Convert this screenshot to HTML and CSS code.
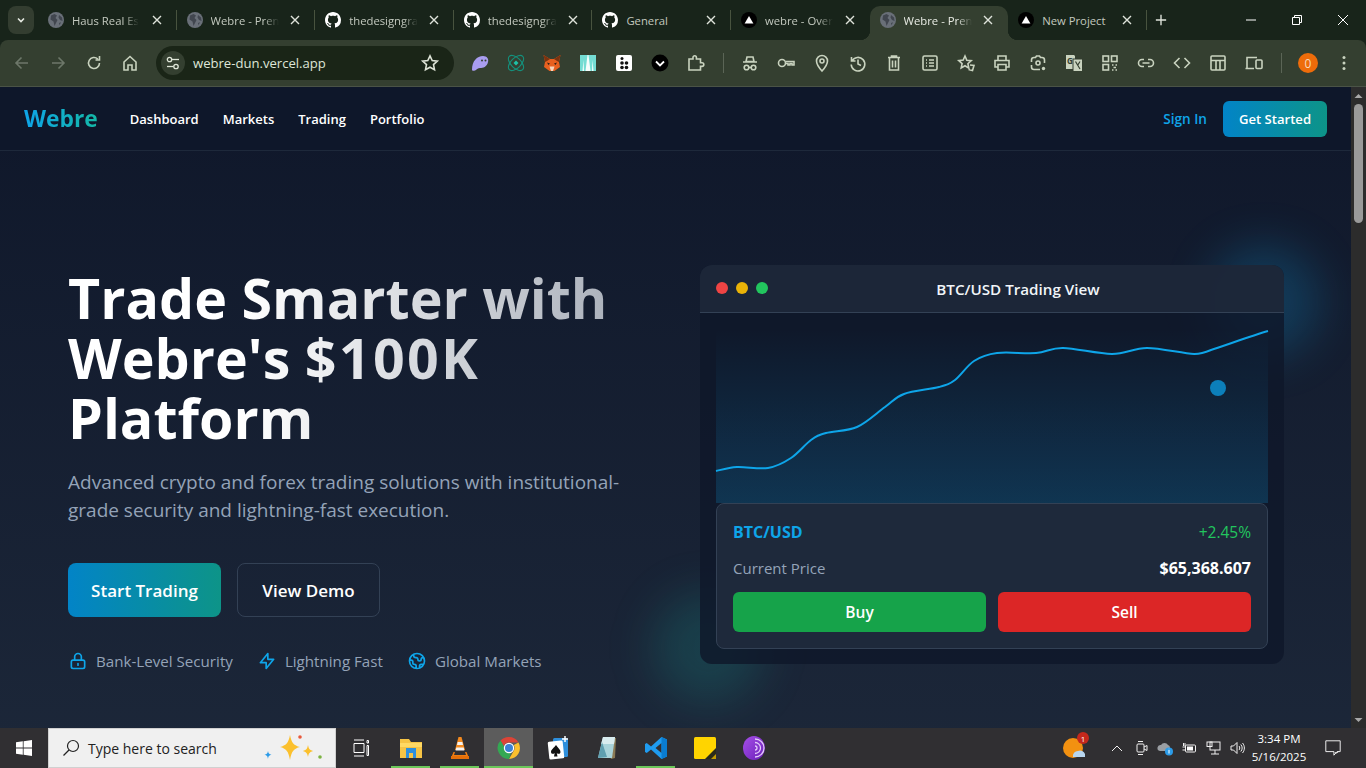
FILE: index.html
```html
<!DOCTYPE html>
<html lang="en">
<head>
<meta charset="utf-8">
<title>Webre - Premium Trading</title>
<link rel="stylesheet" href="styles.css">
</head>
<body>
<svg class="defs" aria-hidden="true">
  <defs>
    <symbol id="globe" viewBox="0 0 16 16"><circle cx="8" cy="8" r="8" fill="#696f78"/><path d="M3 3.500 6.500 2 9 3.500 7.500 6 9.500 8 8 11 6.500 14 5.500 9.500 2.500 7.500ZM11 3l3 2.500.6 3.500-2.600-1-1.500-2.500ZM11 11l2-.8-1.500 3Z" fill="#41464f"/></symbol>
    <symbol id="gh" viewBox="0 0 16 16"><path fill="#fff" d="M8 0C3.58 0 0 3.58 0 8c0 3.54 2.29 6.53 5.47 7.59.4.07.55-.17.55-.38 0-.19-.01-.82-.01-1.49-2.01.37-2.53-.49-2.69-.94-.09-.23-.48-.94-.82-1.13-.28-.15-.68-.52-.01-.53.63-.01 1.08.58 1.23.82.72 1.21 1.87.87 2.33.66.07-.52.28-.87.51-1.07-1.78-.2-3.64-.89-3.64-3.95 0-.87.31-1.59.82-2.15-.08-.2-.36-1.02.08-2.12 0 0 .67-.21 2.2.82.64-.18 1.32-.27 2-.27.68 0 1.36.09 2 .27 1.53-1.04 2.2-.82 2.2-.82.44 1.1.16 1.92.08 2.12.51.56.82 1.27.82 2.15 0 3.07-1.87 3.75-3.65 3.95.29.25.54.73.54 1.48 0 1.07-.01 1.93-.01 2.2 0 .21.15.46.55.38A8.013 8.013 0 0016 8c0-4.42-3.58-8-8-8z"/></symbol>
    <symbol id="vercel" viewBox="0 0 16 16"><circle cx="8" cy="8" r="8" fill="#000"/><path d="M8 4l4.400 7.600H3.600z" fill="#fff"/></symbol>
    <symbol id="x" viewBox="0 0 16 16"><path d="M4 4l8 8M12 4l-8 8" fill="none" stroke="currentColor" stroke-width="1.400"/></symbol>
    <symbol id="back" viewBox="0 0 20 20"><path d="M16 10H4.500M9.500 4.500 4 10l5.500 5.500" /></symbol>
    <symbol id="fwd" viewBox="0 0 20 20"><path d="M4 10h11.500M10.500 4.500 16 10l-5.500 5.500" /></symbol>
    <symbol id="reload" viewBox="0 0 20 20"><path d="M15.500 10a5.500 5.500 0 1 1-1.700-4M15.500 3v4h-4" /></symbol>
    <symbol id="home" viewBox="0 0 20 20"><path d="M4 9 10 3.500 16 9v8h-4v-5H8v5H4z" /></symbol>
    <symbol id="tune" viewBox="0 0 16 16"><path d="M7 4.500h7"/><circle cx="4.500" cy="4.500" r="2.200"/><path d="M2 11.500h6.500"/><circle cx="11" cy="11.500" r="2.200"/></symbol>
    <symbol id="star" viewBox="0 0 20 20"><path d="M10 2.800l2.200 4.700 5.100.6-3.800 3.500 1 5.100L10 14.200l-4.500 2.500 1-5.100-3.800-3.500 5.100-.6z" /></symbol>
    <symbol id="puzzle" viewBox="0 0 20 20"><path d="M3 6h4V4.500a1.700 1.700 0 0 1 3.400 0V6h4.100v3.800H16a1.800 1.800 0 0 1 0 3.600h-1.500V17H3z" /></symbol>
    <symbol id="spy" viewBox="0 0 20 20"><path d="M7 4h6l1 4.500H6zM3 9h14" /><circle cx="6.500" cy="14.500" r="2.300"/><circle cx="13.500" cy="14.500" r="2.300"/><path d="M8.800 14.500h2.400"/></symbol>
    <symbol id="key" viewBox="0 0 20 20"><circle cx="6" cy="10" r="3.500"/><path d="M9.500 8.500H18v3.500h-2v-1.500h-2V12h-2v-1.500H9.500"/></symbol>
    <symbol id="pin" viewBox="0 0 20 20"><path d="M10 18s-5.500-6-5.500-10a5.500 5.500 0 0 1 11 0c0 4-5.500 10-5.500 10z"/><circle cx="10" cy="8" r="2"/></symbol>
    <symbol id="history" viewBox="0 0 20 20"><path d="M3.500 4v4h4M4 8a6.800 6.800 0 1 1-.8 3.500M10 6.500V11l3 1.500"/></symbol>
    <symbol id="trash" viewBox="0 0 20 20"><path d="M4 4.500h12M7.500 4.500V3h5v1.500M5.500 4.500V17h9V4.500M8.500 7.500v7M11.500 7.500v7"/></symbol>
    <symbol id="list" viewBox="0 0 20 20"><rect x="3" y="3" width="14" height="14" rx="1.500"/><path d="M6 7h1M9 7h5M6 10h1M9 10h5M6 13h1M9 13h5"/></symbol>
    <symbol id="stars" viewBox="0 0 20 20"><path d="M9 3l1.800 4.200 4.400.5-3.300 3 .9 4.400L9 12.800 5.200 15l.9-4.400-3.300-3 4.400-.5zM14 12l4 .5-1.500 5-4-1"/></symbol>
    <symbol id="print" viewBox="0 0 20 20"><path d="M6 7V3h8v4M6 14H3V7.500h14V14h-3M6 11.500h8V17H6z"/></symbol>
    <symbol id="lens" viewBox="0 0 20 20"><path d="M3.500 9V7a2.500 2.500 0 0 1 2.500-2.500h1.500l1-1.500h3l1 1.500H14a2.500 2.500 0 0 1 2.500 2.500v3M3.500 12v2A2.500 2.500 0 0 0 6 16.500h6"/><circle cx="10" cy="10" r="2"/><circle cx="15.500" cy="15.500" r="1.700" fill="currentColor" stroke="none"/></symbol>
    <symbol id="translate" viewBox="0 0 20 20"><path d="M2 2h8l1 1v13H2z" fill="currentColor" stroke="none"/><text x="3" y="11" class="gtext">G</text><rect x="9" y="6" width="9.500" height="12.500" fill="currentColor" stroke="#343f30" stroke-width="1"/><path d="M11.500 8.500l4.500 7.500M16 8.500l-2.500 4" stroke="#343f30" stroke-width="1.200"/></symbol>
    <symbol id="qr" viewBox="0 0 20 20"><rect x="3" y="3" width="5.500" height="5.500"/><rect x="11.500" y="3" width="5.500" height="5.500"/><rect x="3" y="11.500" width="5.500" height="5.500"/><path d="M12 12h1.500M15.500 12H17M13.500 14.500H16M12 17h1.500M15.500 17H17" /></symbol>
    <symbol id="link" viewBox="0 0 20 20"><path d="M8 6.500H6a3.500 3.500 0 0 0 0 7h2M12 6.500h2a3.500 3.500 0 0 1 0 7h-2M6.500 10h7"/></symbol>
    <symbol id="code" viewBox="0 0 20 20"><path d="M7.500 5 2.500 10l5 5M12.500 5l5 5-5 5"/></symbol>
    <symbol id="layout" viewBox="0 0 20 20"><rect x="3" y="3" width="14" height="14" rx="1"/><path d="M3 7.500h14M8 7.500V17M12 7.500V17"/></symbol>
    <symbol id="devices" viewBox="0 0 20 20"><path d="M3 15V4.500h10M1.500 15.500H10"/><rect x="12" y="7" width="6" height="8.500" rx="1"/></symbol>
    <linearGradient id="torgrad" x1="0" y1="0" x2="1" y2="1"><stop offset="0" stop-color="#a64fe8"/><stop offset="1" stop-color="#6a1fb8"/></linearGradient>
  </defs>
</svg>

<header class="chrome">
  <div class="tabstrip">
    <div class="tabsearch"><svg class="mini" viewBox="0 0 12 12"><path d="M3 4.500 6 7.500 9 4.500"/></svg></div>
    <div class="tab sep"><svg class="fav"><use href="#globe"/></svg><span class="title fade">Haus Real Es</span><svg class="close"><use href="#x"/></svg></div>
    <div class="tab sep"><svg class="fav"><use href="#globe"/></svg><span class="title fade">Webre - Pren</span><svg class="close"><use href="#x"/></svg></div>
    <div class="tab sep"><svg class="fav"><use href="#gh"/></svg><span class="title fade">thedesigngra</span><svg class="close"><use href="#x"/></svg></div>
    <div class="tab sep"><svg class="fav"><use href="#gh"/></svg><span class="title fade">thedesigngra</span><svg class="close"><use href="#x"/></svg></div>
    <div class="tab sep"><svg class="fav"><use href="#gh"/></svg><span class="title">General</span><svg class="close"><use href="#x"/></svg></div>
    <div class="tab"><svg class="fav"><use href="#vercel"/></svg><span class="title fade">webre - Over</span><svg class="close"><use href="#x"/></svg></div>
    <div class="tab active"><svg class="fav"><use href="#globe"/></svg><span class="title fade">Webre - Pren</span><svg class="close"><use href="#x"/></svg></div>
    <div class="tab sep"><svg class="fav"><use href="#vercel"/></svg><span class="title">New Project</span><svg class="close"><use href="#x"/></svg></div>
    <div class="newtab"><svg class="plus" viewBox="0 0 14 14"><path d="M7 1v12M1 7h12"/></svg></div>
    <div class="winctl">
      <div class="wbtn"><svg viewBox="0 0 12 12"><path d="M1 6h10"/></svg></div>
      <div class="wbtn"><svg viewBox="0 0 12 12"><path d="M1.500 3.500h7v7h-7zM3.500 3.500v-2h7v7h-2"/></svg></div>
      <div class="wbtn"><svg viewBox="0 0 12 12"><path d="M1 1l10 10M11 1 1 11"/></svg></div>
    </div>
  </div>
  <div class="toolbar">
    <div class="tb dim"><svg class="ic"><use href="#back"/></svg></div>
    <div class="tb dim"><svg class="ic"><use href="#fwd"/></svg></div>
    <div class="tb"><svg class="ic"><use href="#reload"/></svg></div>
    <div class="tb"><svg class="ic"><use href="#home"/></svg></div>
    <div class="omnibox">
      <span class="siteinfo"><svg class="tune"><use href="#tune"/></svg></span>
      <span class="url">webre-dun.vercel.app</span>
      <svg class="ic"><use href="#star"/></svg>
    </div>
    <div class="tb"><svg class="ext" viewBox="0 0 20 20"><path d="M2 17C2 8 7 3 13 3c4 0 6 3 5 6-1 5-5 6-8 6-2 0-3 1-4 2-1 .8-4 1-4 0z" fill="#a99df0"/><circle cx="12" cy="7.500" r="1" fill="#343f30"/><circle cx="15.500" cy="7.500" r="1" fill="#343f30"/></svg></div>
    <div class="tb"><svg class="ext" viewBox="0 0 20 20" fill="none" stroke="#14907c" stroke-width="1.100"><ellipse cx="10" cy="10" rx="9.500" ry="5" transform="rotate(45 10 10)"/><ellipse cx="10" cy="10" rx="9.500" ry="5" transform="rotate(-45 10 10)"/><path d="M10 7.500 12.500 10 10 12.500 7.500 10z" fill="#1fc0a5" stroke="none"/></svg></div>
    <div class="tb"><svg class="ext" viewBox="0 0 20 20"><path d="M1.500 2 8 6h4l6.500-4L17 9l1 5-3.500 2.500-2 1.500h-5l-2-1.500L2 14l1-5z" fill="#e8601f"/><path d="M1.500 2 8 6 5 8 3 9zM18.500 2 12 6l3 2 2 1z" fill="#7a3310"/><path d="M5 9.500l3 1-1.500 1.500zM15 9.500l-3 1 1.500 1.500z" fill="#2d2018"/><path d="M7.500 13.500h5L11 18H9z" fill="#f5d6bd"/></svg></div>
    <div class="tb"><svg class="ext" viewBox="0 0 20 20"><rect x="2" y="2" width="16" height="16" fill="#f4fdfc"/><path d="M2 2h7.500L7.500 18H6L5.500 7 4.500 18H2zM18 2h-7.500l2 16H14l.5-11 1 11H18z" fill="#74dcd3"/></svg></div>
    <div class="tb"><svg class="ext" viewBox="0 0 20 20"><rect x="2" y="2" width="16" height="16" rx="2" fill="#fff"/><g fill="#111"><circle cx="8" cy="5.500" r="1.500"/><circle cx="8" cy="10" r="1.800"/><circle cx="12.500" cy="10" r="1.800"/><circle cx="8" cy="14.500" r="1.800"/><circle cx="12.500" cy="14.500" r="1.800"/></g></svg></div>
    <div class="tb"><svg class="ext" viewBox="0 0 20 20"><circle cx="10" cy="10" r="8.500" fill="#000"/><path d="M6 8.500l4 4 4-4" fill="none" stroke="#fff" stroke-width="1.800"/></svg></div>
    <div class="tb"><svg class="ic"><use href="#puzzle"/></svg></div>
    <div class="tbsep"></div>
    <div class="tb"><svg class="ic"><use href="#spy"/></svg></div>
    <div class="tb"><svg class="ic"><use href="#key"/></svg></div>
    <div class="tb"><svg class="ic"><use href="#pin"/></svg></div>
    <div class="tb"><svg class="ic"><use href="#history"/></svg></div>
    <div class="tb"><svg class="ic"><use href="#trash"/></svg></div>
    <div class="tb"><svg class="ic"><use href="#list"/></svg></div>
    <div class="tb"><svg class="ic"><use href="#stars"/></svg></div>
    <div class="tb"><svg class="ic"><use href="#print"/></svg></div>
    <div class="tb"><svg class="ic"><use href="#lens"/></svg></div>
    <div class="tb"><svg class="ic"><use href="#translate"/></svg></div>
    <div class="tb"><svg class="ic"><use href="#qr"/></svg></div>
    <div class="tb"><svg class="ic"><use href="#link"/></svg></div>
    <div class="tb"><svg class="ic"><use href="#code"/></svg></div>
    <div class="tb"><svg class="ic"><use href="#layout"/></svg></div>
    <div class="tb"><svg class="ic"><use href="#devices"/></svg></div>
    <div class="tbsep"></div>
    <div class="tb"><span class="avatar">0</span></div>
    <div class="tb"><svg class="ic dots" viewBox="0 0 20 20"><circle cx="10" cy="4.500" r="1.500"/><circle cx="10" cy="10" r="1.500"/><circle cx="10" cy="15.500" r="1.500"/></svg></div>
  </div>
</header>

<div class="viewport">
  <main class="page">
    <nav class="nav">
      <div class="nav-left">
        <span class="logo">Webre</span>
        <a class="navlink">Dashboard</a>
        <a class="navlink">Markets</a>
        <a class="navlink">Trading</a>
        <a class="navlink">Portfolio</a>
      </div>
      <div class="nav-right">
        <a class="signin">Sign In</a>
        <a class="getstarted">Get Started</a>
      </div>
    </nav>
    <section class="hero">
      <div class="copy">
        <h1 class="headline">Trade Smarter with Webre's <span class="amount">$100K</span> Platform</h1>
        <p class="lead">Advanced crypto and forex trading solutions with institutional-grade security and lightning-fast execution.</p>
        <div class="cta">
          <a class="btn primary">Start Trading</a>
          <a class="btn ghost">View Demo</a>
        </div>
        <div class="features">
          <div class="feature"><svg class="ficon" viewBox="0 0 24 24"><path d="M12 15v2m-6 4h12a2 2 0 002-2v-6a2 2 0 00-2-2H6a2 2 0 00-2 2v6a2 2 0 002 2zm10-10V7a4 4 0 00-8 0v4h8z"/></svg><span>Bank-Level Security</span></div>
          <div class="feature"><svg class="ficon" viewBox="0 0 24 24"><path d="M13 10V3L4 14h7v7l9-11h-7z"/></svg><span>Lightning Fast</span></div>
          <div class="feature"><svg class="ficon" viewBox="0 0 24 24"><path d="M3.055 11H5a2 2 0 012 2v1a2 2 0 002 2 2 2 0 012 2v2.945M8 3.935V5.500A2.500 2.500 0 0010.500 8h.5a2 2 0 012 2 2 2 0 104 0 2 2 0 012-2h1.064M15 20.488V18a2 2 0 012-2h3.064M21 12a9 9 0 11-18 0 9 9 0 0118 0z"/></svg><span>Global Markets</span></div>
        </div>
      </div>
      <div class="cardwrap">
        <div class="glow glow-sky"></div>
        <div class="glow glow-teal"></div>
        <div class="card">
          <div class="card-head">
            <div class="lights"><i class="l red"></i><i class="l amber"></i><i class="l green"></i></div>
            <div class="card-title">BTC/USD Trading View</div>
          </div>
          <div class="card-body">
            <div class="chart">
              <svg class="chart-svg" viewBox="0 0 552 174" preserveAspectRatio="none">
                <path class="chart-line" d="M0 142C3.500 141.300 12.300 138.500 21 138C29.700 137.500 43 140.500 52 139C61 137.500 67.800 133.700 75 129C82.200 124.300 89.200 115.200 95 111C100.800 106.800 102.300 106.200 110 104C117.700 101.800 131.200 102.300 141 98C150.800 93.700 161.200 83.500 169 78C176.800 72.500 179 68.300 188 65C197 61.700 214.500 60.300 223 58C231.500 55.700 233.200 55.300 239 51C244.800 46.700 251 36.500 258 32C265 27.500 270.700 25.300 281 24C291.300 22.700 309 24.800 320 24C331 23.200 334.300 18.800 347 19C359.700 19.200 382 25 396 25C410 25 417.300 19 431 19C444.700 19 467.300 24.700 478 25C484 25.200 489 23.500 495 21C505 18 535 7 552 2"/>
              </svg>
              <i class="dot"></i>
            </div>
            <div class="ticket">
              <div class="row r1"><span class="pair">BTC/USD</span><span class="chg">+2.45%</span></div>
              <div class="row r2"><span class="cur">Current Price</span><span class="price">$65,368.607</span></div>
              <div class="trade"><a class="tbtn buy">Buy</a><a class="tbtn sell">Sell</a></div>
            </div>
          </div>
        </div>
      </div>
    </section>
  </main>
  <aside class="scrollbar">
    <svg class="sarrow" viewBox="0 0 15 17"><path d="M3.500 11l4-4 4 4z"/></svg>
    <div class="thumb"></div>
    <div class="strack"></div>
    <svg class="sarrow" viewBox="0 0 15 17"><path d="M3.500 7l4 4 4-4z"/></svg>
  </aside>
</div>

<footer class="taskbar">
  <div class="start"><svg viewBox="0 0 16 16" class="winlogo"><path d="M0 2.300 6.800 1.300v6.300H0zM7.600 1.200 16 0v7.600H7.600zM0 8.400h6.800v6.300L0 13.700zM7.600 8.400H16V16l-8.400-1.200z"/></svg></div>
  <div class="search">
    <svg class="lens-s" viewBox="0 0 18 18"><circle cx="11" cy="7" r="5.500"/><path d="M7 11l-5.500 5.500"/></svg>
    <span class="stext">Type here to search</span>
    <svg class="spark" viewBox="0 0 64 30"><path d="M28 2c1.500 8 4 10.500 10 12-6 1.500-8.500 4-10 13-1.500-9-4-11.500-10-13 6-1.500 8.500-4 10-12z" fill="#fbc02d"/><path d="M46 12c.7 4 2 5 5 6-3 1-4.300 2-5 6-.7-4-2-5-5-6 3-1 4.300-2 5-6z" fill="#fbc02d"/><path d="M6 18c.4 2.500 1 3 3.500 3.700C7 22.500 6.400 23 6 26c-.4-3-1-3.500-3.500-4.300C5 21 5.600 20.500 6 18z" fill="#2b9be8"/><circle cx="38" cy="4" r="1.800" fill="#e8593b"/><circle cx="58" cy="24" r="1.800" fill="#7cb342"/></svg>
  </div>
  <div class="taskview"><svg viewBox="0 0 18 18" class="tvicon"><path d="M2 1h10M2 17h10M2 4.500h10v9H2zM15 1.500h1.500V4H15zM15 6.500h1.500v10H15z"/></svg></div>
  <div class="apps">
    <div class="app open"><svg viewBox="0 0 24 24"><path d="M1 3h9l2 3h11v16H1z" fill="#f6c445"/><path d="M1 7h22v4H1z" fill="#ffd964"/><path d="M7 12h10v10h-3v-5h-4v5H7z" fill="#2e8fdc"/></svg></div>
    <div class="app open"><svg viewBox="0 0 24 24"><path d="M10.500 1h3L17 14H7z" fill="#f48a1f"/><path d="M9.700 6h4.600l.7 3H9z" fill="#f2f2f2"/><path d="M8.300 11.500h7.400l.7 3H7.600z" fill="#f2f2f2"/><path d="M5.500 16 3 22h18l-2.500-6H17l1 3H6l1-3z" fill="#ef7d11"/><path d="M3 20h18v3H3z" fill="#e56f09"/></svg></div>
    <div class="app open current"><svg viewBox="0 0 24 24"><path d="M12 1a11 11 0 0 1 9.500 5.500H12a5.500 5.500 0 0 0-5.200 3.700L3.500 4.600A11 11 0 0 1 12 1z" fill="#db4437"/><path d="M21.500 6.500A11 11 0 0 1 12 23l4.800-8.300A5.500 5.500 0 0 0 16.800 9z" fill="#fbc02d"/><path d="M12 23A11 11 0 0 1 3.500 4.600l4.800 8.200a5.500 5.500 0 0 0 5.700 4z" fill="#34a853"/><circle cx="12" cy="12" r="5.200" fill="#fff"/><circle cx="12" cy="12" r="4" fill="#3b82d6"/></svg></div>
    <div class="app"><svg viewBox="0 0 24 24"><rect x="7" y="2" width="15" height="19" rx="1.500" fill="#2e8fdc"/><path d="M19 0v6M16 3h6" stroke="#fff" stroke-width="1.500"/><rect x="2.500" y="5" width="15" height="18" rx="1.500" fill="#fff" transform="rotate(-6 10 14)"/><path d="M10 9c2 3 4.500 4.500 4.500 7 0 2-2.500 2.500-3.700 1l.7 3.500H8l.7-3.500C7.500 18.500 5 18 5 16c0-2.500 3-4 5-7z" fill="#111"/></svg></div>
    <div class="app"><svg viewBox="0 0 24 24"><path d="M8 2h13l-1 20-4 1z" fill="#8a7a55"/><path d="M8 1h12l-3 21H3z" fill="#a9d3da"/><path d="M8 1h12l-1 7H6z" fill="#d9ecef"/><path d="M3 22 7 6l5 15z" fill="#5f9fb0"/></svg></div>
    <div class="app open"><svg viewBox="0 0 24 24"><path d="M17.500 1 23 3.500v17L17.500 23 7 13.500 2.800 17 1 16V8l1.800-1L7 10.500zM17.500 7l-6 5 6 5z" fill="#1f9cf0"/><path d="M17.500 1 23 3.500v17L17.500 23z" fill="#0a7cd0"/></svg></div>
    <div class="app"><svg viewBox="0 0 24 24"><rect x="1" y="1" width="22" height="22" rx="1.500" fill="#ffd400"/><path d="M23 12 12 23h11z" fill="#2a2a1a"/><path d="M23 18l-5 5h5z" fill="#c29a00"/></svg></div>
    <div class="app"><svg viewBox="0 0 24 24"><ellipse cx="12" cy="12" rx="11" ry="12" fill="url(#torgrad)"/><g fill="none" stroke="#e3c9fa" stroke-width="1.300"><path d="M13 3a9 9 0 0 1 0 18"/><path d="M13 6.500a5.500 5.500 0 0 1 0 11"/><path d="M13 10a2 2 0 0 1 0 4"/></g></svg></div>
  </div>
  <div class="tray">
    <div class="weather"><svg viewBox="0 0 24 24"><circle cx="11" cy="12" r="10" fill="#f29111"/><path d="M11 21a5 5 0 0 1 5-6 5 5 0 0 1 7 3v3z" fill="#b8d6ef"/></svg><b class="badge">1</b></div>
    <div class="tri"><svg viewBox="0 0 16 16"><path d="M3 11l5-5 5 5"/></svg></div>
    <div class="tri"><svg viewBox="0 0 16 16"><rect x="4" y="4" width="7" height="8" rx="1"/><path d="M11 7l3-1.500v5L11 9M5 1.500h5M5 14.500h5"/></svg></div>
    <div class="tri"><svg viewBox="0 0 16 16"><path d="M3 11a3 3 0 0 1 1-6 4 4 0 0 1 7 0 3 3 0 0 1 2 3v3z" fill="#9a9ea3" stroke="none"/><circle cx="12" cy="11.500" r="4" fill="#2b9be8" stroke="none"/><path d="M12 10v3.500M12 8.800v.4" stroke="#fff"/></svg></div>
    <div class="tri"><svg viewBox="0 0 16 16"><rect x="4.500" y="5" width="10" height="7" rx="1"/><path d="M1.500 7h3M1.500 10h3M2.500 3v3M4 3v3"/><rect x="6" y="6.500" width="6" height="4" fill="#fff" stroke="none"/></svg></div>
    <div class="tri"><svg viewBox="0 0 16 16"><rect x="5" y="2" width="10" height="8"/><rect x="2" y="2" width="5" height="4.500"/><path d="M10 10v4M6 14h8"/></svg></div>
    <div class="tri"><svg viewBox="0 0 16 16"><path d="M2 6h2.500L8 2.500v11L4.500 10H2zM10 6c1 1 1 3 0 4M11.800 4.500c1.800 2 1.800 5 0 7M13.500 3c2.500 3 2.500 7 0 10"/></svg></div>
    <div class="clock"><span>3:34 PM</span><span>5/16/2025</span></div>
    <div class="notif"><svg viewBox="0 0 20 20"><path d="M2 2h16v12h-3.500L11 18v-4H2z"/><path d="M12 15c2 1 3 .5 4-1" /></svg></div>
  </div>
</footer>
</body>
</html>
```
FILE: styles.css
```css
* { box-sizing: border-box; }
html, body { margin: 0; padding: 0; height: 100%; overflow: hidden; }
body {
  width: 1366px; height: 768px;
  display: flex; flex-direction: column;
  font-family: "Open Sans", "Noto Sans", "Liberation Sans", sans-serif;
  background: #0f172a;
}
.defs { width: 0; height: 0; position: absolute; }
svg { display: block; }

/* browser chrome */
.chrome { height: 87px; flex: none; background: #18241a; display: flex; flex-direction: column; }
.tabstrip { height: 40px; display: flex; align-items: flex-end; padding-left: 8px; }
.tabsearch { width: 26px; height: 28px; margin: 0 4px 6px 0; background: #333d30; border-radius: 8px; display: flex; align-items: center; justify-content: center; }
.mini { width: 12px; height: 12px; fill: none; stroke: #e6eae2; stroke-width: 1.600; }
.tab { width: 138.6px; height: 34px; padding: 0 10px 6px; display: flex; align-items: center; gap: 8px; color: #c3c9bf; font-size: 11.300px; position: relative; flex: none; }
.tab.sep::after { content: ""; position: absolute; right: 0; top: 4px; width: 1px; height: 20px; background: #48533f; }
.tab.active { background: #343f30; border-radius: 10px 10px 0 0; color: #e8ebe4; }
.tab.active::before, .tab.active::after { content: ""; position: absolute; bottom: 0; width: 10px; height: 10px; }
.tab.active::before { left: -10px; background: radial-gradient(circle at 0 0, transparent 10px, #343f30 10.500px); }
.tab.active::after { right: -10px; background: radial-gradient(circle at 100% 0, transparent 10px, #343f30 10.500px); }
.fav { width: 16px; height: 16px; flex: none; }
.title { flex: none; white-space: nowrap; }
.fade { -webkit-mask-image: linear-gradient(to right, #000 78%, transparent 100%); mask-image: linear-gradient(to right, #000 78%, transparent 100%); }
.close { width: 16px; height: 16px; flex: none; color: #dfe3db; margin-left: auto; margin-right: 2px; }
.newtab { width: 28px; height: 40px; display: flex; align-items: center; justify-content: center; }
.plus { width: 12px; height: 12px; fill: none; stroke: #dfe3db; stroke-width: 1.600; }
.winctl { display: flex; margin-left: auto; height: 40px; }
.wbtn { width: 46px; height: 40px; display: flex; align-items: center; justify-content: center; }
.wbtn svg { width: 12px; height: 12px; fill: none; stroke: #fff; stroke-width: 1; }

.toolbar { height: 47px; background: #343f30; border-radius: 8px 8px 0 0; display: flex; align-items: center; padding: 0 4px; border-bottom: 1px solid #4a5346; }
.tb { width: 36px; height: 36px; display: flex; align-items: center; justify-content: center; color: #c9d3bf; flex: none; }
.tb.dim { color: #6d7769; }
.ic { width: 20px; height: 20px; fill: none; stroke: currentColor; stroke-width: 1.600; flex: none; }
.ic.dots { fill: currentColor; stroke: none; }
.gtext { font-family: "Open Sans", sans-serif; font-size: 8px; font-weight: 700; fill: #343f30; stroke: none; }
.ext { width: 20px; height: 20px; }
.tbsep { width: 1px; height: 20px; background: #5b6556; margin: 0 8.500px; flex: none; }
.omnibox { width: 298px; height: 34px; margin: 0 8px; border-radius: 17px; background: #1a2517; display: flex; align-items: center; padding: 0 14px 0 5px; flex: none; color: #dde3d6; }
.siteinfo { width: 24px; height: 24px; border-radius: 50%; background: #343f30; display: flex; align-items: center; justify-content: center; flex: none; margin-right: 8px; }
.tune { width: 16px; height: 16px; fill: none; stroke: #dfe6d8; stroke-width: 1.300; }
.url { flex: 1; font-size: 13.100px; color: #dfe6d8; }
.avatar { width: 20px; height: 20px; border-radius: 50%; background: #ee6c0a; color: #f7d9bd; font-size: 12px; display: flex; align-items: center; justify-content: center; }

/* viewport */
.viewport { flex: 1; min-height: 0; display: flex; }
.page { width: 1351px; flex: none; background: linear-gradient(to bottom, #0f172a 0%, #1c2739 105%); overflow: hidden; }
.scrollbar { width: 15px; flex: none; background: #2c2c2c; display: flex; flex-direction: column; }
.sarrow { width: 15px; height: 17px; fill: #a8a8a8; flex: none; }
.thumb { width: 9px; height: 119px; margin-left: 3px; background: #9a9a9a; border-radius: 4.500px; flex: none; }
.strack { flex: 1; }

.nav { height: 64px; padding: 0 24px; display: flex; align-items: center; justify-content: space-between; background: #0e172a; border-bottom: 1px solid #1e293b; }
.nav-left, .nav-right { display: flex; align-items: center; }
.logo { font-size: 22.800px; font-weight: 700; background: linear-gradient(to right, #0ea5e9, #14b8a6); -webkit-background-clip: text; background-clip: text; color: transparent; margin-right: 32px; }
.navlink { font-size: 13px; font-weight: 600; color: #fff; margin-right: 24px; }
.signin { font-size: 13.600px; font-weight: 600; color: #0ea5e9; margin-right: 16px; }
.getstarted { width: 104px; height: 36px; border-radius: 6px; background: linear-gradient(to right, #0284c7, #0d9488); color: #fff; font-size: 13.100px; font-weight: 600; display: flex; align-items: center; justify-content: center; }

.hero { display: grid; grid-template-columns: 584px 584px; column-gap: 48px; padding: 114px 0 0 68px; align-items: start; }
.copy { padding-top: 3px; }
.headline { margin: 0 0 20px; font-size: 55.600px; line-height: 60px; font-weight: 700; background: linear-gradient(to right, #fff 30%, #9ca3af 105%); -webkit-background-clip: text; background-clip: text; color: transparent; }
.amount { letter-spacing: 2.300px; }
.lead { margin: 0 0 39px; font-size: 19px; line-height: 28px; color: #94a3b8; }
.cta { display: flex; gap: 16px; margin-bottom: 32px; }
.btn { height: 54px; border-radius: 8px; font-size: 17px; font-weight: 600; color: #fff; display: flex; align-items: center; justify-content: center; }
.btn.primary { width: 153px; background: linear-gradient(to right, #0284c7, #0d9488); }
.btn.ghost { width: 143px; border: 1px solid #334155; }
.features { display: flex; gap: 24px; }
.feature { display: flex; align-items: center; gap: 8px; font-size: 15.150px; line-height: 24px; color: #94a3b8; }
.ficon { width: 20px; height: 20px; fill: none; stroke: #0ea5e9; stroke-width: 2; stroke-linecap: round; stroke-linejoin: round; flex: none; }

.cardwrap { position: relative; width: 584px; height: 399px; }
.card { position: relative; height: 399px; background: rgba(15,23,42,.82); border-radius: 12px; }
.card-head { height: 48px; background: rgba(30,41,59,.85); border-bottom: 1px solid #334155; border-radius: 12px 12px 0 0; display: flex; align-items: center; padding: 0 16px; }
.lights { display: flex; gap: 8px; flex: none; margin-top: -1px; }
.l { width: 12px; height: 12px; border-radius: 50%; display: block; }
.red { background: #ef4444; }
.amber { background: #eab308; }
.green { background: #22c55e; }
.card-title { flex: 1; text-align: center; color: #f1f5f9; font-size: 15.200px; font-weight: 600; }
.card-body { padding: 16px 16px 15px; }
.chart { position: relative; height: 174px; background: linear-gradient(to bottom, rgba(14,165,233,0), rgba(14,165,233,.2)); }
.chart-svg { width: 552px; height: 174px; overflow: visible; }
.chart-line { fill: none; stroke: #0ea5e9; stroke-width: 2; }
.dot { position: absolute; left: 494px; top: 51px; width: 16px; height: 16px; border-radius: 50%; background: #0c7fba; }
.ticket { height: 146px; background: #1e293b; border: 1px solid #334155; border-radius: 8px; padding: 16px; }
.row { display: flex; justify-content: space-between; align-items: center; height: 24px; margin-bottom: 12px; font-size: 16px; }
.pair { color: #0ea5e9; font-weight: 700; }
.chg { color: #22c55e; font-size: 15.500px; }
.cur { color: #94a3b8; font-size: 15px; }
.price { color: #fff; font-weight: 700; }
.trade { display: flex; gap: 12px; }
.tbtn { flex: 1; height: 40px; border-radius: 6px; color: #fff; font-size: 15.500px; font-weight: 600; display: flex; align-items: center; justify-content: center; }
.buy { background: #16a34a; }
.sell { background: #dc2626; }
.glow { position: absolute; width: 112px; height: 112px; border-radius: 50%; filter: blur(22px); }
.glow-sky { right: -36px; top: -20px; background: rgba(14,165,233,.22); }
.glow-teal { left: -48px; bottom: -40px; background: rgba(20,184,166,.18); }

/* taskbar */
.taskbar { height: 40px; flex: none; background: #302f32; display: flex; align-items: stretch; color: #fff; }
.start { width: 48px; display: flex; align-items: center; justify-content: center; }
.winlogo { width: 16px; height: 16px; fill: #fff; }
.search { width: 288px; background: #f0f0f0; border: 1px solid #d0d0d0; display: flex; align-items: center; padding-left: 13px; }
.lens-s { width: 18px; height: 18px; fill: none; stroke: #222; stroke-width: 1.200; flex: none; margin-right: 8px; }
.stext { font-size: 14px; color: #222; flex: 1; }
.spark { width: 64px; height: 30px; flex: none; margin-right: 9px; }
.taskview { width: 50px; display: flex; align-items: center; justify-content: center; }
.tvicon { width: 18px; height: 18px; fill: none; stroke: #fff; stroke-width: 1; }
.apps { display: flex; }
.app { width: 49px; display: flex; align-items: center; justify-content: center; position: relative; }
.app svg { width: 24px; height: 24px; }
.app.open::after { content: ""; position: absolute; left: 5px; right: 5px; bottom: 0; height: 2px; background: #6cc75a; }
.app.current { background: #5c5c5c; }
.app.current::after { left: 0; right: 0; }
.tray { margin-left: auto; display: flex; align-items: center; padding-right: 9px; }
.weather { width: 24px; height: 24px; margin-right: 19px; position: relative; }
.weather svg { width: 24px; height: 24px; }
.badge { position: absolute; right: -3px; top: -4px; width: 12px; height: 12px; border-radius: 50%; background: #c4281c; color: #fff; font-size: 8px; font-weight: 400; display: flex; align-items: center; justify-content: center; }
.tri { width: 24px; height: 24px; display: flex; align-items: center; justify-content: center; }
.tri svg { width: 16px; height: 16px; fill: none; stroke: #f0f0f0; stroke-width: 1; }
.clock { width: 60px; display: flex; flex-direction: column; align-items: center; font-size: 11.500px; line-height: 18px; }
.notif { width: 48px; display: flex; align-items: center; justify-content: center; }
.notif svg { width: 18px; height: 18px; fill: none; stroke: #fff; stroke-width: 1; }
```
